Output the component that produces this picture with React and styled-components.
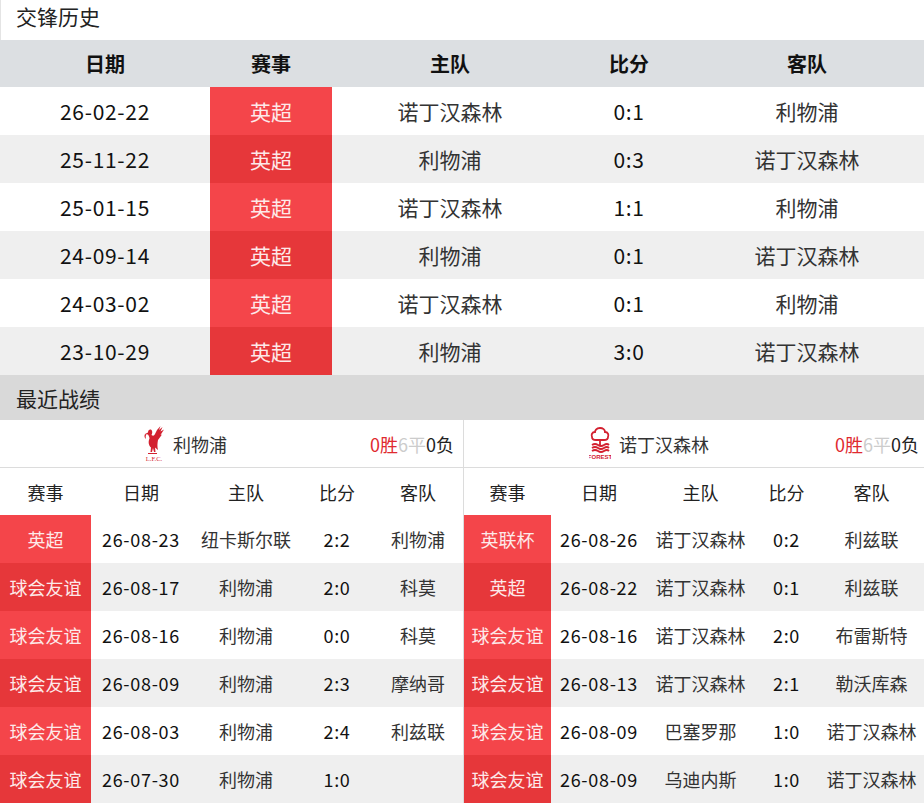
import React from "react";
import styled, { createGlobalStyle } from "styled-components";

const Global = createGlobalStyle`
  html, body { margin: 0; padding: 0; background: #fff; }
  body { font-family: "Microsoft YaHei", "Noto Sans CJK SC", "Noto Sans", sans-serif; }
  * { box-sizing: border-box; }
`;

const Page = styled.div`
  width: 924px;
  background: #fff;
  overflow: hidden;
`;

const SectionTitle = styled.div`
  height: ${(p) => p.$h}px;
  display: flex;
  align-items: ${(p) => (p.$top ? "flex-start" : "center")};
  padding-left: 15px;
  font-size: 21px;
  line-height: ${(p) => (p.$top ? "32px" : "normal")};
  color: #222;
  background: ${(p) => p.$bg};
  border-left: 1px solid ${(p) => (p.$top ? "#e4e4e4" : "transparent")};
`;

const Row = styled.div`
  display: grid;
  grid-template-columns: ${(p) => p.$cols};
  height: ${(p) => p.$h}px;
  background: ${(p) => p.$bg};
`;

const Cell = styled.div`
  display: flex;
  align-items: center;
  justify-content: center;
  white-space: nowrap;
  font-size: ${(p) => p.$size}px;
  font-weight: ${(p) => (p.$bold ? 700 : 400)};
  color: ${(p) => p.$color || "#333"};
  letter-spacing: ${(p) => (p.$num ? "0.7px" : "0")};
`;

const RedCell = styled(Cell)`
  background: ${(p) => (p.$odd ? "#f4454a" : "#e6373a")};
  color: #fde9e9;
`;

const Panels = styled.div`
  display: grid;
  grid-template-columns: 463px 1px 460px;
`;

const Divider = styled.div`
  background: #dcdcdc;
`;

const Panel = styled.div`
  display: flex;
  flex-direction: column;
`;

const TeamBar = styled.div`
  height: 48px;
  display: grid;
  grid-template-columns: 370px 1fr;
  border-bottom: 1px solid #dcdcdc;
`;

const TeamName = styled.div`
  display: flex;
  align-items: center;
  justify-content: center;
  gap: 8px;
  font-size: 18px;
  color: #333;
`;

const Record = styled.div`
  display: flex;
  align-items: center;
  justify-content: flex-end;
  padding-right: ${(p) => p.$pr}px;
  font-size: 18px;
`;

const Rec = styled.span`
  color: ${(p) => p.$c};
`;

const LiverpoolLogo = () => (
  <svg width="22" height="37" viewBox="0 0 22 37">
    <g fill="#d3202f">
      <path d="M2 9 L5 7.5 C5 5 7 4 8.5 5 C9.5 6 9.5 8 8.5 10 C10 11 11 11 12 9 L14 5 L17.5 1 L16 5 L19.5 2 L17.5 6.5 L21 4.5 L17.5 10 L19 9.5 L15 15 C14.5 18 14 21 15 25 L12 22.5 L12.5 27 L11 27 L10 23 L9 27 L7.5 27 L8 22.5 C5.5 20.5 5 16.5 6.5 13.5 C6.5 11.5 5.5 10.5 5 9.5 Z" />
      <path d="M2 9 C1 11 1.5 13 3 14 C2.5 12 2.5 10.5 3.5 9.5 Z" />
      <path d="M5 28 L14 28 L14 29 L5 29 Z" />
    </g>
    <text x="11" y="35.5" fontSize="6.5" textAnchor="middle" fill="#d3202f" fontFamily="Liberation Serif, serif">L.F.C.</text>
  </svg>
);

const ForestLogo = () => (
  <svg width="22" height="35" viewBox="0 0 22 35">
    <g fill="none" stroke="#d3202f" strokeWidth="1.8">
      <path d="M11 2 C7 2 6 5 6 6 C3 6 2 9 3 11 C3 13 5 14 7 14 L15 14 C17 14 19 13 19 11 C20 9 19 6 16 6 C16 4 14 2 11 2 Z" />
      <path d="M11 14 L11 19" />
      <path d="M3 19 Q6 17 9 19 T15 19 T20 19" />
      <path d="M3 22 Q6 20 9 22 T15 22 T20 22" />
      <path d="M3 25 Q6 23 9 25 T15 25 T20 25" />
    </g>
    <text x="11" y="33" fontSize="6" textAnchor="middle" fill="#d3202f" fontFamily="Liberation Sans, sans-serif" fontWeight="700">FOREST</text>
  </svg>
);

const h2h = [
  ["26-02-22", "英超", "诺丁汉森林", "0:1", "利物浦"],
  ["25-11-22", "英超", "利物浦", "0:3", "诺丁汉森林"],
  ["25-01-15", "英超", "诺丁汉森林", "1:1", "利物浦"],
  ["24-09-14", "英超", "利物浦", "0:1", "诺丁汉森林"],
  ["24-03-02", "英超", "诺丁汉森林", "0:1", "利物浦"],
  ["23-10-29", "英超", "利物浦", "3:0", "诺丁汉森林"],
];

const liverpool = [
  ["英超", "26-08-23", "纽卡斯尔联", "2:2", "利物浦"],
  ["球会友谊", "26-08-17", "利物浦", "2:0", "科莫"],
  ["球会友谊", "26-08-16", "利物浦", "0:0", "科莫"],
  ["球会友谊", "26-08-09", "利物浦", "2:3", "摩纳哥"],
  ["球会友谊", "26-08-03", "利物浦", "2:4", "利兹联"],
  ["球会友谊", "26-07-30", "利物浦", "1:0", ""],
];

const forest = [
  ["英联杯", "26-08-26", "诺丁汉森林", "0:2", "利兹联"],
  ["英超", "26-08-22", "诺丁汉森林", "0:1", "利兹联"],
  ["球会友谊", "26-08-16", "诺丁汉森林", "2:0", "布雷斯特"],
  ["球会友谊", "26-08-13", "诺丁汉森林", "2:1", "勒沃库森"],
  ["球会友谊", "26-08-09", "巴塞罗那", "1:0", "诺丁汉森林"],
  ["球会友谊", "26-08-09", "乌迪内斯", "1:0", "诺丁汉森林"],
];

const H2H_COLS = "210px 122px 236px 122px 1fr";
const rowBg = (i) => (i % 2 === 0 ? "#ffffff" : "#efefef");

const RecentPanel = ({ logo, name, cols, rows, pr }) => (
  <Panel>
    <TeamBar>
      <TeamName>
        {logo}
        <span>{name}</span>
      </TeamName>
      <Record $pr={pr}>
        <Rec $c="#e02a2f">0胜</Rec>
        <Rec $c="#cccccc">6平</Rec>
        <Rec $c="#222">0负</Rec>
      </Record>
    </TeamBar>
    <Row $cols={cols} $h={47} $bg="#fff">
      {["赛事", "日期", "主队", "比分", "客队"].map((t) => (
        <Cell key={t} $size={18} $color="#222">{t}</Cell>
      ))}
    </Row>
    {rows.map((r, i) => (
      <Row key={i} $cols={cols} $h={48} $bg={rowBg(i)}>
        <RedCell $size={18} $odd={i % 2 === 0}>{r[0]}</RedCell>
        <Cell $size={18} $color="#111" $num>{r[1]}</Cell>
        <Cell $size={18}>{r[2]}</Cell>
        <Cell $size={18} $color="#111" $num>{r[3]}</Cell>
        <Cell $size={18}>{r[4]}</Cell>
      </Row>
    ))}
  </Panel>
);

export default function App() {
  return (
    <Page>
      <Global />
      <SectionTitle $h={40} $top $bg="#fff">交锋历史</SectionTitle>
      <Row $cols={H2H_COLS} $h={47} $bg="#dcdfe2">
        {["日期", "赛事", "主队", "比分", "客队"].map((t) => (
          <Cell key={t} $size={20} $bold $color="#111">{t}</Cell>
        ))}
      </Row>
      {h2h.map((r, i) => (
        <Row key={i} $cols={H2H_COLS} $h={48} $bg={rowBg(i)}>
          <Cell $size={21} $color="#111" $num>{r[0]}</Cell>
          <RedCell $size={21} $odd={i % 2 === 0}>{r[1]}</RedCell>
          <Cell $size={21}>{r[2]}</Cell>
          <Cell $size={21} $color="#111" $num>{r[3]}</Cell>
          <Cell $size={21}>{r[4]}</Cell>
        </Row>
      ))}
      <SectionTitle $h={45} $bg="#d9d9d9">最近战绩</SectionTitle>
      <Panels>
        <RecentPanel
          logo={<LiverpoolLogo />}
          name="利物浦"
          cols="91px 100px 110px 72px 1fr"
          rows={liverpool}
          pr={9}
        />
        <Divider />
        <RecentPanel
          logo={<ForestLogo />}
          name="诺丁汉森林"
          cols="87px 96px 107px 65px 1fr"
          rows={forest}
          pr={5}
        />
      </Panels>
    </Page>
  );
}
